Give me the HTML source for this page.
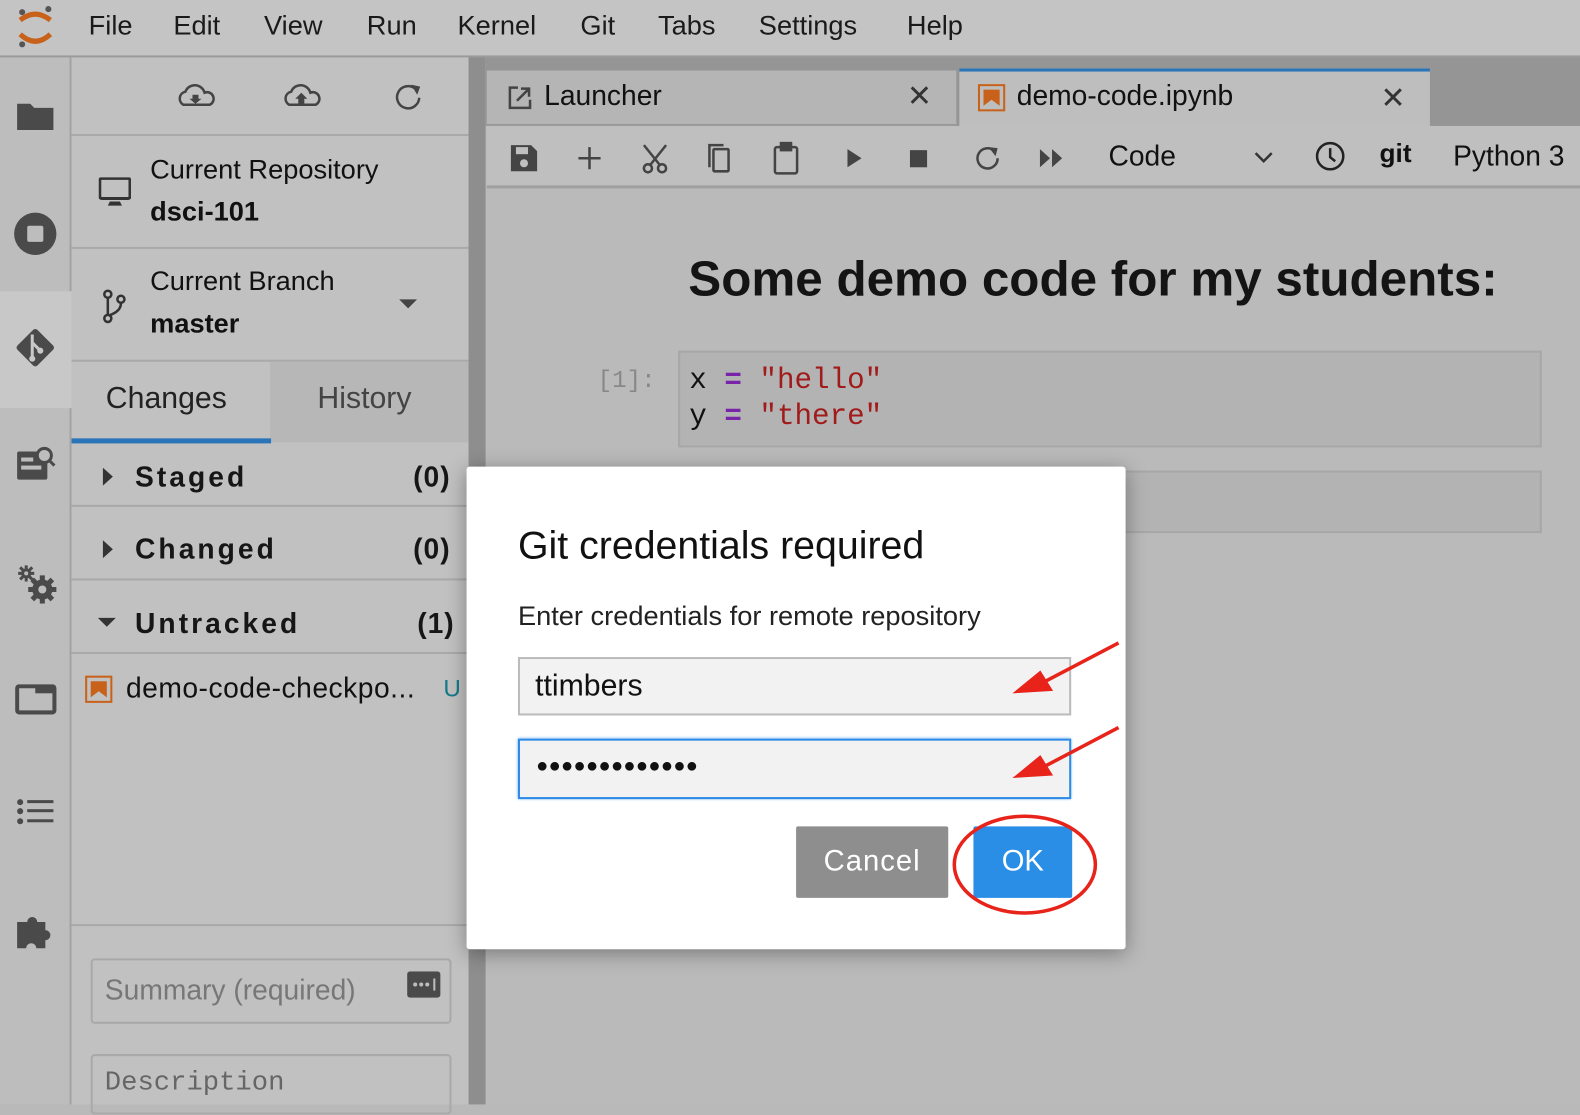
<!DOCTYPE html>
<html><head><meta charset="utf-8"><style>
*{box-sizing:border-box;margin:0;padding:0}
body{width:1580px;height:1096px;overflow:hidden;background:#b9b9b9;font-family:"Liberation Sans",sans-serif;position:relative;color:#111}
#w{position:absolute;left:0;top:0;width:1568px;height:1088px;transform:scale(1.0077);transform-origin:0 0}
.a{position:absolute}
.menu{left:0;top:0;width:1580px;height:57px;background:#c4c4c4;border-bottom:2px solid #9a9a9a}
.menu span{position:absolute;top:10px;font-size:27px;color:#1a1a1a}
.bar{left:0;top:57px;width:71px;height:1039px;background:#bdbdbd;border-right:2px solid #a3a3a3}
.panel{left:71px;top:57px;width:394px;height:1039px;background:#c1c1c1}
.sep{left:465px;top:57px;width:17px;height:1039px;background:#8e8e8e}
.hl{height:2px;background:#a9a9a9;left:71px;width:394px}
.sec{font-size:28px;font-weight:bold;letter-spacing:3px;color:#161616}
.main{left:482px;top:57px;width:1098px;height:1039px;background:#bababa}
</style></head><body><div id="w">
<div class="a menu">
 <svg class="a" style="left:14px;top:4px" width="42" height="46"><circle cx="8" cy="8" r="3" fill="#555"/><circle cx="34" cy="5" r="3" fill="#555"/><circle cx="8" cy="40" r="3" fill="#555"/><path d="M6 16 Q21 4 36 16" stroke="#c8621a" stroke-width="5" fill="none"/><path d="M6 30 Q21 44 36 30" stroke="#c8621a" stroke-width="5" fill="none"/></svg>
 <span style="left:88px">File</span><span style="left:172px">Edit</span><span style="left:262px">View</span><span style="left:364px">Run</span><span style="left:454px">Kernel</span><span style="left:576px">Git</span><span style="left:653px">Tabs</span><span style="left:753px">Settings</span><span style="left:900px">Help</span>
</div>
<div class="a bar">
 <div class="a" style="left:0;top:232px;width:71px;height:116px;background:#c8c8c8"></div>
 <svg class="a" style="left:16px;top:40px" width="40" height="36"><path d="M1 6h13l4 4h19v22H1z" fill="#4a4a4a"/></svg>
 <svg class="a" style="left:13px;top:153px" width="44" height="44"><circle cx="22" cy="22" r="21" fill="#4a4a4a"/><rect x="14" y="14" width="16" height="16" rx="2" fill="#bdbdbd"/></svg>
 <svg class="a" style="left:12px;top:265px" width="46" height="46"><rect x="9" y="9" width="28" height="28" transform="rotate(45 23 23)" rx="3" fill="#4a4a4a"/><path d="M20 10v24M20 18l8 8" stroke="#c8c8c8" stroke-width="3"/><circle cx="20" cy="34" r="3" fill="#c8c8c8"/><circle cx="28" cy="26" r="3" fill="#c8c8c8"/></svg>
 <svg class="a" style="left:16px;top:385px" width="40" height="36"><rect x="1" y="6" width="30" height="28" rx="2" fill="#4a4a4a"/><rect x="5" y="12" width="12" height="4" fill="#bdbdbd"/><rect x="5" y="20" width="20" height="4" fill="#bdbdbd"/><circle cx="28" cy="10" r="7" fill="#bdbdbd" stroke="#4a4a4a" stroke-width="3"/><path d="M32 14l6 6" stroke="#4a4a4a" stroke-width="3"/></svg>
 <svg class="a" style="left:16px;top:502px" width="40" height="40"><g fill="#4a4a4a"><circle cx="10" cy="10" r="5"/><g stroke="#4a4a4a" stroke-width="3"><path d="M10 2v16M2 10h16M4 4l12 12M16 4L4 16"/></g><circle cx="26" cy="26" r="10"/><g stroke="#4a4a4a" stroke-width="5"><path d="M26 12v28M12 26h28M16 16l20 20M36 16L16 36"/></g></g><circle cx="10" cy="10" r="2" fill="#bdbdbd"/><circle cx="26" cy="26" r="4" fill="#bdbdbd"/></svg>
 <svg class="a" style="left:15px;top:622px" width="42" height="32"><rect x="2" y="2" width="37" height="26" rx="2" fill="none" stroke="#4a4a4a" stroke-width="4"/><rect x="20" y="2" width="19" height="7" fill="#4a4a4a"/></svg>
 <svg class="a" style="left:16px;top:735px" width="40" height="30"><g fill="#4a4a4a"><circle cx="4" cy="4" r="3"/><circle cx="4" cy="13" r="3"/><circle cx="4" cy="23" r="3"/><rect x="11" y="2" width="26" height="3"/><rect x="11" y="11" width="26" height="3"/><rect x="11" y="21" width="26" height="3"/></g></svg>
 <svg class="a" style="left:16px;top:846px" width="40" height="40"><path d="M1 12h10a5 5 0 1 1 10 0h8v8a5 5 0 1 1 0 10v8h-9a5 5 0 1 0 -10 0H1z" fill="#4a4a4a"/></svg>
</div>
<div class="a panel"></div>
<svg class="a" style="left:176px;top:82px" width="250" height="28"><g stroke="#444" stroke-width="2.5" fill="none"><path d="M6 22a7 7 0 0 1 2-13a10 10 0 0 1 19 1a6 6 0 0 1 5 12z"/><path d="M111 22a7 7 0 0 1 2-13a10 10 0 0 1 19 1a6 6 0 0 1 5 12z"/><path d="M236 6a11 11 0 1 0 4 9"/></g><path d="M15 12h6v4h3l-6 5-6-5h3z" fill="#444"/><path d="M120 21v-5h-3l6-6 6 6h-3v5z" fill="#444"/><path d="M232 2l9 2-3 8z" fill="#444"/></svg>
<div class="a hl" style="top:133px"></div>
<svg class="a" style="left:98px;top:176px" width="32" height="30"><rect x="1" y="1" width="30" height="20" rx="2" fill="none" stroke="#333" stroke-width="3"/><path d="M11 24h10l2 4H9z" fill="#333"/></svg>
<div class="a" style="left:149px;top:153px;font-size:27px">Current Repository</div>
<div class="a" style="left:149px;top:195px;font-size:27px;font-weight:bold">dsci-101</div>
<div class="a hl" style="top:245px"></div>
<svg class="a" style="left:101px;top:287px" width="26" height="34"><g stroke="#333" stroke-width="2.5" fill="none"><circle cx="6" cy="5" r="3.5"/><circle cx="19" cy="10" r="3.5"/><circle cx="6" cy="29" r="3.5"/><path d="M6 9v16M19 14q0 8-12 12"/></g></svg>
<div class="a" style="left:149px;top:264px;font-size:27px">Current Branch</div>
<div class="a" style="left:149px;top:306px;font-size:27px;font-weight:bold">master</div>
<svg class="a" style="left:396px;top:297px" width="20" height="12"><path d="M0 0h18l-9 9z" fill="#444"/></svg>
<div class="a hl" style="top:357px"></div>
<div class="a" style="left:268px;top:359px;width:197px;height:80px;background:#b7b7b7"></div>
<div class="a" style="left:105px;top:379px;font-size:30px;color:#222">Changes</div>
<div class="a" style="left:315px;top:379px;font-size:30px;color:#444">History</div>
<div class="a" style="left:71px;top:435px;width:198px;height:5px;background:#2a74b8"></div>
<svg class="a" style="left:102px;top:464px" width="12" height="20"><path d="M0 0l10 9-10 9z" fill="#333"/></svg>
<div class="a sec" style="left:134px;top:458px">Staged</div><div class="a sec" style="left:410px;top:458px;letter-spacing:1px">(0)</div>
<div class="a hl" style="top:501px"></div>
<svg class="a" style="left:102px;top:536px" width="12" height="20"><path d="M0 0l10 9-10 9z" fill="#333"/></svg>
<div class="a sec" style="left:134px;top:529px">Changed</div><div class="a sec" style="left:410px;top:529px;letter-spacing:1px">(0)</div>
<div class="a hl" style="top:574px"></div>
<svg class="a" style="left:97px;top:613px" width="20" height="12"><path d="M0 0h18l-9 9z" fill="#333"/></svg>
<div class="a sec" style="left:134px;top:603px">Untracked</div><div class="a sec" style="left:414px;top:603px;letter-spacing:1px">(1)</div>
<div class="a hl" style="top:647px"></div>
<svg class="a" style="left:84px;top:670px" width="28" height="28"><rect x="1.5" y="1.5" width="25" height="25" fill="none" stroke="#c8621a" stroke-width="2"/><path d="M6 6h16v16l-8-6-8 6z" fill="#c8621a"/></svg>
<div class="a" style="left:125px;top:667px;font-size:28px;letter-spacing:.5px">demo-code-checkpo...</div>
<div class="a" style="left:440px;top:670px;font-size:24px;color:#167a8a">U</div>
<div class="a hl" style="top:917px"></div>
<div class="a" style="left:90px;top:951px;width:358px;height:65px;border:2px solid #a9a9a9;border-radius:4px"></div>
<div class="a" style="left:104px;top:967px;font-size:28px;color:#777">Summary (required)</div>
<svg class="a" style="left:404px;top:964px" width="34" height="28"><rect width="33" height="26" rx="3" fill="#4a4a4a"/><g fill="#bdbdbd"><circle cx="8" cy="13" r="2"/><circle cx="14" cy="13" r="2"/><circle cx="20" cy="13" r="2"/><rect x="26" y="7" width="2" height="12"/></g></svg>
<div class="a" style="left:90px;top:1046px;width:358px;height:60px;border:2px solid #a9a9a9;border-radius:4px"></div>
<div class="a" style="left:104px;top:1060px;font-size:27px;color:#666;font-family:'Liberation Mono',monospace">Description</div>
<div class="a sep"></div>
<div class="a main"></div>
<div class="a" style="left:482px;top:57px;width:1098px;height:68px;background:#959595"></div>
<div class="a" style="left:483px;top:70px;width:466px;height:55px;background:#b5b5b5;border-bottom:2px solid #999"></div>
<svg class="a" style="left:504px;top:85px" width="24" height="24"><path d="M10 2H2v20h20v-8" fill="none" stroke="#444" stroke-width="2.5"/><path d="M9 15L21 3M13 3h8v8" fill="none" stroke="#444" stroke-width="2.5"/></svg>
<div class="a" style="left:540px;top:79px;font-size:28px">Launcher</div>
<div class="a" style="left:900px;top:78px;font-size:30px;color:#333">✕</div>
<div class="a" style="left:952px;top:68px;width:467px;height:60px;background:#bebebe;border-top:3px solid #2a74b8"></div>
<svg class="a" style="left:970px;top:83px" width="28" height="28"><rect x="1.5" y="1.5" width="25" height="25" fill="none" stroke="#c8621a" stroke-width="2"/><path d="M6 6h16v16l-8-6-8 6z" fill="#c8621a"/></svg>
<div class="a" style="left:1009px;top:79px;font-size:28px">demo-code.ipynb</div>
<div class="a" style="left:1370px;top:80px;font-size:30px;color:#333">✕</div>
<div class="a" style="left:483px;top:125px;width:1097px;height:62px;background:#bfbfbf;border-bottom:3px solid #a0a0a0"></div>
<svg class="a" style="left:505px;top:140px" width="680" height="34" fill="#444" stroke="#444">
 <path d="M2 4h20l6 6v20H2z" stroke="none"/><rect x="7" y="6" width="12" height="7" fill="#bfbfbf" stroke="none"/><circle cx="15" cy="22" r="4" fill="#bfbfbf" stroke="none"/>
 <path d="M80 6v22M69 17h22" stroke-width="2.5"/>
 <g fill="none" stroke-width="2.5"><circle cx="138" cy="27" r="4"/><circle cx="152" cy="27" r="4"/><path d="M140 24L156 4M150 24L134 4"/></g>
 <g fill="none" stroke-width="2.5"><rect x="203" y="8" width="15" height="22" rx="1"/><path d="M199 26V4h14"/></g>
 <g fill="none" stroke-width="2.5"><rect x="264" y="6" width="22" height="26" rx="2"/><rect x="270" y="2" width="10" height="7" fill="#444"/></g>
 <path d="M336 8l14 9-14 9z" stroke="none"/>
 <rect x="398" y="9" width="17" height="17" stroke="none"/>
 <path d="M482 10a10 10 0 1 0 3 7" fill="none" stroke-width="2.5"/><path d="M476 6l9 1-2 8z" stroke="none"/>
 <path d="M527 8l10 9-10 9zM539 8l10 9-10 9z" stroke="none"/>
</svg>
<div class="a" style="left:1100px;top:139px;font-size:28px">Code</div>
<svg class="a" style="left:1244px;top:150px" width="20" height="14"><path d="M2 2l8 8 8-8" fill="none" stroke="#333" stroke-width="2.5"/></svg>
<svg class="a" style="left:1304px;top:139px" width="32" height="32"><circle cx="16" cy="16" r="13" fill="none" stroke="#222" stroke-width="2.5"/><path d="M16 8v9l5 4" fill="none" stroke="#222" stroke-width="2.5"/></svg>
<div class="a" style="left:1369px;top:137px;font-size:26px;font-weight:bold">git</div>
<div class="a" style="left:1442px;top:139px;font-size:28px">Python 3</div>
<div class="a" style="left:683px;top:249px;font-size:49px;font-weight:bold;color:#141414">Some demo code for my students:</div>
<div class="a" style="left:593px;top:365px;font-size:24px;color:#888;font-family:'Liberation Mono',monospace">[1]:</div>
<div class="a" style="left:673px;top:348px;width:857px;height:96px;background:#b3b3b3;border:2px solid #a7a7a7"></div>
<div class="a" style="left:684px;top:360px;font-size:29px;line-height:36px;font-family:'Liberation Mono',monospace">x <span style="color:#7a22a8;font-weight:bold">=</span> <span style="color:#a11b1b">"hello"</span><br>y <span style="color:#7a22a8;font-weight:bold">=</span> <span style="color:#a11b1b">"there"</span></div>
<div class="a" style="left:673px;top:467px;width:857px;height:62px;background:#b3b3b3;border:2px solid #a7a7a7"></div>
<div class="a" style="left:463px;top:463px;width:654px;height:479px;background:#fff;border-radius:3px;box-shadow:0 4px 20px rgba(0,0,0,.35)"></div>
<div class="a" style="left:514px;top:520px;font-size:39px;color:#111">Git credentials required</div>
<div class="a" style="left:514px;top:596px;font-size:27px;color:#222">Enter credentials for remote repository</div>
<div class="a" style="left:514px;top:652px;width:549px;height:58px;background:#f2f2f2;border:2px solid #bbb"></div>
<div class="a" style="left:531px;top:664px;font-size:30px">ttimbers</div>
<div class="a" style="left:514px;top:733px;width:549px;height:60px;background:#f2f2f2;border:2px solid #2d8ae6;box-shadow:0 0 3px #5aa7f0"></div>
<div class="a" style="left:532px;top:749px;font-size:20px;letter-spacing:0.3px">●●●●●●●●●●●●●</div>
<svg class="a" style="left:1000px;top:630px" width="120" height="150"><g stroke="#e8231a" stroke-width="3.5" fill="#e8231a"><path d="M110 8L30 50" /><path d="M10 56l22-18 10 16z"/><path d="M110 92L30 134"/><path d="M10 140l22-18 10 16z"/></g></svg>
<div class="a" style="left:790px;top:820px;width:151px;height:71px;background:#8e8e8e;border-radius:2px;color:#fff;font-size:29px;text-align:center;line-height:71px;letter-spacing:1px">Cancel</div>
<div class="a" style="left:966px;top:820px;width:98px;height:71px;background:#2a8ee6;border-radius:2px;color:#fff;font-size:29px;text-align:center;line-height:71px">OK</div>
<svg class="a" style="left:944px;top:806px" width="146" height="104"><ellipse cx="73" cy="52" rx="70" ry="48" fill="none" stroke="#e8231a" stroke-width="3.5"/></svg>
</div></body></html>
